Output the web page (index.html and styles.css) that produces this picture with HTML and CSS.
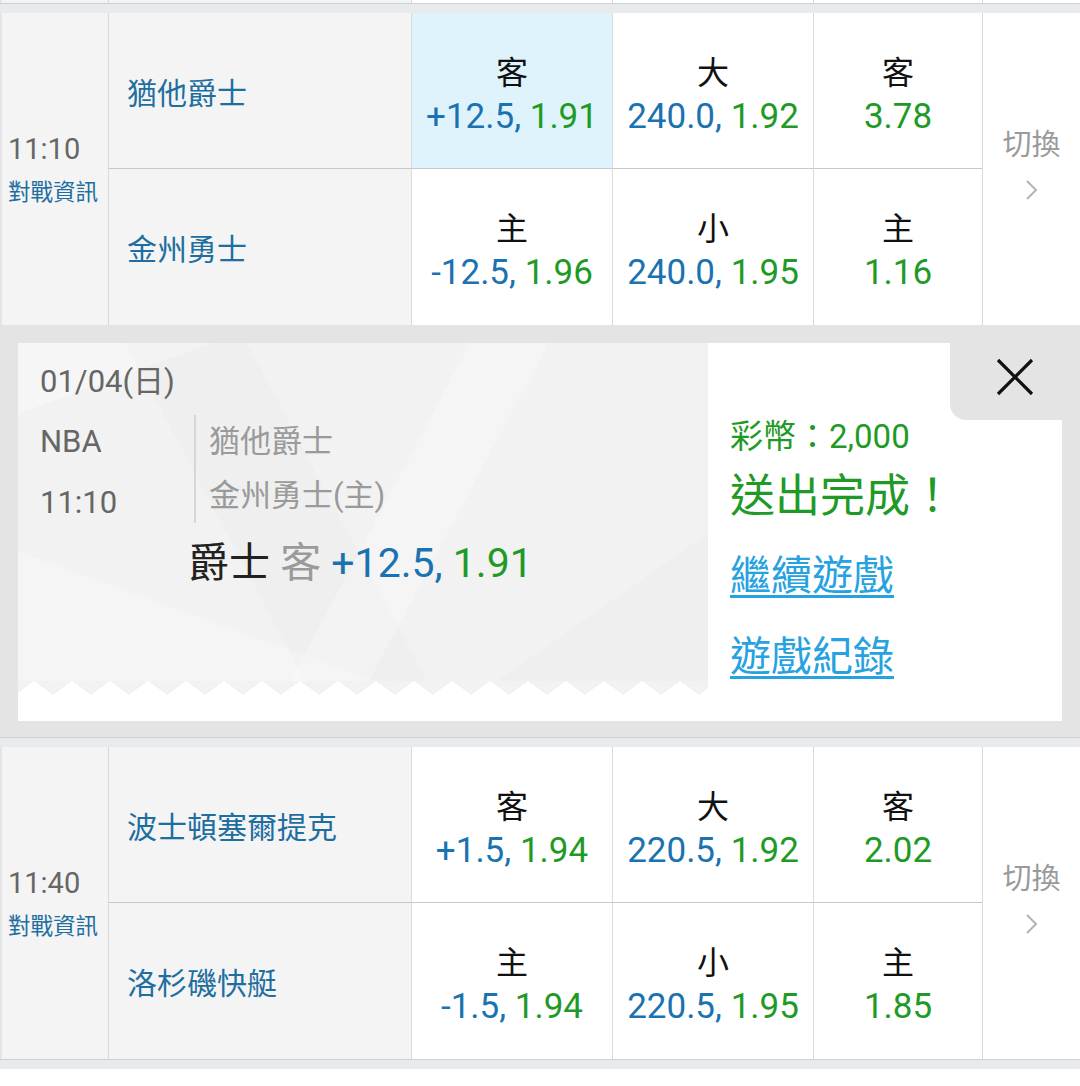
FILE: index.html
```html
<!DOCTYPE html>
<html lang="zh-Hant">
<head>
<meta charset="utf-8">
<title>賽事</title>
<link rel="stylesheet" href="styles.css">
</head>
<body>
<div class="prev">
  <div class="pc pc-time"></div><div class="pc pc-team"></div><div class="pc"></div><div class="pc"></div><div class="pc"></div><div class="pc"></div>
</div>
<div class="band"></div>

<section class="match">
  <div class="time-cell"><div class="time">11:10</div><div class="info">對戰資訊</div></div>
  <div class="team top">猶他爵士</div>
  <div class="odd top sel"><div class="lbl">客</div><div class="val"><span class="b">+12.5,</span> <span class="g">1.91</span></div></div>
  <div class="odd top"><div class="lbl">大</div><div class="val"><span class="b">240.0,</span> <span class="g">1.92</span></div></div>
  <div class="odd top"><div class="lbl">客</div><div class="val"><span class="g">3.78</span></div></div>
  <div class="switch"><div class="sw-text">切換</div><svg class="chev" width="14" height="22" viewBox="0 0 14 22"><polyline points="2,2 11,11 2,20" fill="none" stroke="#b4b4b4" stroke-width="2"/></svg></div>
  <div class="team">金州勇士</div>
  <div class="odd"><div class="lbl">主</div><div class="val"><span class="b">-12.5,</span> <span class="g">1.96</span></div></div>
  <div class="odd"><div class="lbl">小</div><div class="val"><span class="b">240.0,</span> <span class="g">1.95</span></div></div>
  <div class="odd"><div class="lbl">主</div><div class="val"><span class="g">1.16</span></div></div>
</section>

<div class="popup">
  <div class="card">
    <div class="ticket">
      <div class="ticket-body">
        <div class="date">01/04(日)</div>
        <div class="game">
          <div class="game-meta"><div class="league">NBA</div><div class="gtime">11:10</div></div>
          <div class="game-teams"><div class="gteam">猶他爵士</div><div class="gteam">金州勇士(主)</div></div>
        </div>
        <div class="bet"><span class="bet-team">爵士</span> <span class="bet-side">客</span> <span class="b">+12.5,</span> <span class="g">1.91</span></div>
      </div>
      <div class="zigzag"></div>
    </div>
    <div class="result">
      <div class="result-top">
        <div class="close"><svg width="38" height="38" viewBox="0 0 38 38"><path d="M2 2 L36 36 M36 2 L2 36" stroke="#111" stroke-width="3.2" fill="none"/></svg></div>
      </div>
      <div class="coins">彩幣：2,000</div>
      <div class="done">送出完成！</div>
      <a class="link link-first" href="#">繼續遊戲</a>
      <a class="link link-second" href="#">遊戲紀錄</a>
    </div>
  </div>
  <div class="popup-foot"></div>
  <div class="band"></div>
</div>

<section class="match">
  <div class="time-cell"><div class="time">11:40</div><div class="info">對戰資訊</div></div>
  <div class="team top">波士頓塞爾提克</div>
  <div class="odd top"><div class="lbl">客</div><div class="val"><span class="b">+1.5,</span> <span class="g">1.94</span></div></div>
  <div class="odd top"><div class="lbl">大</div><div class="val"><span class="b">220.5,</span> <span class="g">1.92</span></div></div>
  <div class="odd top"><div class="lbl">客</div><div class="val"><span class="g">2.02</span></div></div>
  <div class="switch"><div class="sw-text">切換</div><svg class="chev" width="14" height="22" viewBox="0 0 14 22"><polyline points="2,2 11,11 2,20" fill="none" stroke="#b4b4b4" stroke-width="2"/></svg></div>
  <div class="team">洛杉磯快艇</div>
  <div class="odd"><div class="lbl">主</div><div class="val"><span class="b">-1.5,</span> <span class="g">1.94</span></div></div>
  <div class="odd"><div class="lbl">小</div><div class="val"><span class="b">220.5,</span> <span class="g">1.95</span></div></div>
  <div class="odd"><div class="lbl">主</div><div class="val"><span class="g">1.85</span></div></div>
</section>
<div class="band"></div>
</body>
</html>
```
FILE: styles.css
```css
* { box-sizing: border-box; margin: 0; padding: 0; }
html, body { background: #fff; }
body {
  width: 1080px;
  font-family: Roboto, "Noto Sans CJK TC", sans-serif;
}

.prev {
  display: grid;
  grid-template-columns: 108px 303px 201px 201px 169px 98px;
  height: 3px;
}
.pc { border-left: 1px solid #dadada; background: #fff; }
.pc-time { border-left: 2px solid #e4e4e4; background: #f4f4f4; }
.pc-team { background: #f4f4f4; }

.band {
  height: 10px;
  background: #e9eaeb;
  border-top: 1px solid #cdd1d4;
}

.match {
  display: grid;
  grid-template-columns: 108px 303px 201px 201px 169px 98px;
  grid-template-rows: 156px 156px;
}
.time-cell {
  grid-row: span 2;
  background: #f4f4f4;
  border-left: 2px solid #e4e4e4;
  padding-left: 6px;
  display: flex;
  flex-direction: column;
  justify-content: center;
}
.time { font-size: 29px; line-height: 40px; color: #666; }
.info { font-size: 22.5px; line-height: 34px; color: #1e6ea0; margin-top: 6px; white-space: nowrap; }

.team {
  background: #f4f4f4;
  border-left: 1px solid #dadada;
  display: flex;
  align-items: center;
  padding-left: 18px;
  font-size: 30px;
  color: #1e6ea0;
}
.top { border-bottom: 1px solid #bfcad3; }

.odd {
  border-left: 1px solid #dadada;
  background: #fff;
  display: flex;
  flex-direction: column;
  justify-content: center;
  align-items: center;
  padding-top: 8px;
}
.odd.sel { background: #dff3fd; }
.lbl { font-size: 32px; line-height: 43px; color: #111; }
.val { font-size: 35px; line-height: 43px; white-space: nowrap; }
.b { color: #1b72b0; }
.g { color: #1f9a26; }

.switch {
  grid-row: span 2;
  border-left: 1px solid #dadada;
  background: #fff;
  display: flex;
  flex-direction: column;
  align-items: center;
  justify-content: center;
  padding-bottom: 13px;
}
.sw-text { font-size: 29px; line-height: 40px; color: #9a9a9a; }
.chev { margin-top: 14px; }

/* popup */
.popup {
  background: #e4e4e4;
  padding-top: 18px;
}
.card {
  margin: 0 18px;
  height: 378px;
  background: #fff;
  display: flex;
}
.popup-foot { height: 16px; }

.ticket {
  width: 690px;
  display: flex;
  flex-direction: column;
}
.ticket-body {
  height: 338px;
  padding: 19px 22px 0;
  background:
    linear-gradient(118deg, rgba(255,255,255,0) 0 52%, rgba(255,255,255,.22) 52% 61%, rgba(255,255,255,0) 61%),
    linear-gradient(62deg, rgba(0,0,0,0) 0 33%, rgba(0,0,0,.012) 33% 47%, rgba(0,0,0,0) 47%),
    linear-gradient(160deg, rgba(255,255,255,.3) 0 12%, rgba(255,255,255,0) 12%),
    linear-gradient(-35deg, rgba(0,0,0,.012) 0 18%, rgba(0,0,0,0) 18%),
    linear-gradient(20deg, rgba(255,255,255,.25) 0 22%, rgba(255,255,255,0) 22%),
    #f2f2f2;
}
.zigzag {
  height: 14px;
  background-image: conic-gradient(from -53.6deg at 50% 100%, #f2f2f2 0 107.2deg, rgba(242,242,242,0) 0);
  background-size: 38px 14px;
  background-position: 16px 0;
  background-repeat: repeat-x;
}

.date { font-size: 31px; line-height: 40px; color: #666; }
.game { display: flex; align-items: flex-start; margin-top: 13px; }
.game-meta { width: 154px; color: #666; font-size: 31px; }
.league { line-height: 54px; }
.gtime { line-height: 54px; margin-top: 7px; }
.game-teams {
  border-left: 2px solid #d6d6d6;
  padding-left: 13px;
  color: #9a9a9a;
  font-size: 31px;
}
.gteam { line-height: 54px; }
.bet {
  margin-top: 11px;
  padding-left: 148px;
  font-size: 41px;
  line-height: 44px;
  white-space: nowrap;
}
.bet-team { color: #222; }
.bet-side { color: #9a9a9a; }

.result {
  flex: 1;
  display: flex;
  flex-direction: column;
  align-items: flex-start;
  padding-left: 22px;
}
.result-top {
  align-self: stretch;
  display: flex;
  justify-content: flex-end;
}
.close {
  width: 112px;
  height: 77px;
  background: #e4e4e4;
  border-bottom-left-radius: 16px;
  display: flex;
  align-items: center;
  justify-content: center;
  padding: 0 0 10px 18px;
}
.coins { font-size: 33px; line-height: 34px; color: #1f9a26; white-space: nowrap; }
.done { font-size: 45px; line-height: 56px; color: #1f9a26; margin-top: 15px; white-space: nowrap; }
.link {
  font-size: 41px;
  line-height: 50px;
  color: #26a2e0;
  text-decoration: underline;
  text-decoration-thickness: 3px;
  text-underline-offset: 5px;
}
.link-first { margin-top: 26px; }
.link-second { margin-top: 31px; }
```
